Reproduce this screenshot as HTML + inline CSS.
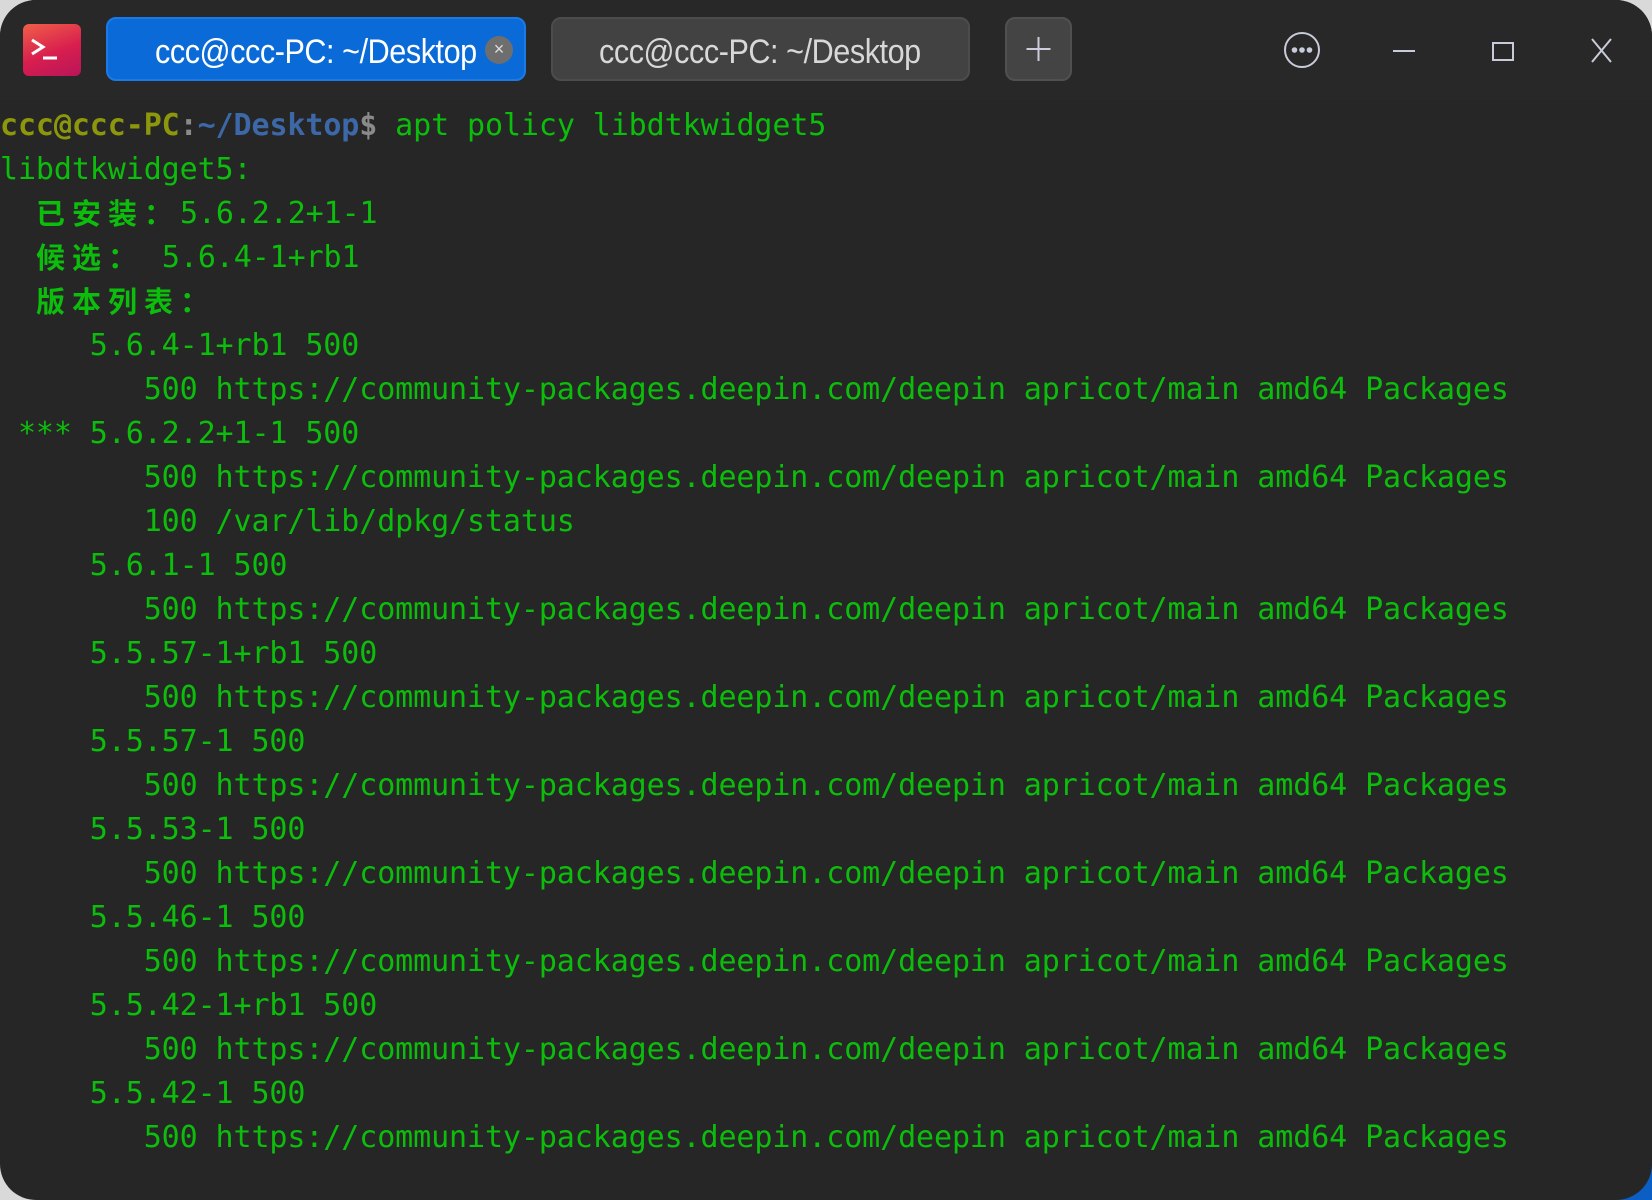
<!DOCTYPE html>
<html><head><meta charset="utf-8"><style>
html,body{margin:0;padding:0;width:1652px;height:1200px;overflow:hidden;background:#d9d9d9;}
body{position:relative;}
.bl{position:absolute;right:0;bottom:0;width:80px;height:80px;background:#0b5fc4;}
.win{position:absolute;left:0;top:0;width:1652px;height:1200px;background:#262626;border-radius:36px;overflow:hidden;}
.title{position:absolute;left:0;top:0;width:1652px;height:100px;background:#282828;}
.icon{position:absolute;left:23px;top:24px;width:58px;height:52px;border-radius:6px;background:linear-gradient(160deg,#f06048,#d81e4e 55%,#b8155a);}
.tab{position:absolute;top:17px;height:64px;border-radius:10px;box-sizing:border-box;font-family:"Liberation Sans",sans-serif;font-size:34px;letter-spacing:-0.5px;line-height:64px;}
.tab span.tx{position:absolute;top:1px;transform:scaleX(0.9);transform-origin:left center;white-space:nowrap;}
.t1{left:106px;width:420px;background:#0a6ad8;border:2px solid #1a7ae8;color:#fff;}
.t2{left:551px;width:419px;background:#424242;border:2px solid #4c4c4c;color:#d8d8d8;}
.t3{left:1005px;width:67px;background:#444;border:2px solid #505050;}
.term{position:absolute;left:0;top:104px;font-family:"DejaVu Sans Mono","Noto Sans CJK SC",monospace;font-size:30px;line-height:44px;color:#0cbd0c;white-space:pre;letter-spacing:-0.1px;}
.term div{height:44px;}
.u{color:#8c970b;font-weight:bold}.c{color:#8a8a8a;font-weight:bold}.d{color:#3d68a8;font-weight:bold}
.k{display:inline-block;width:36px;height:44px;line-height:40px;vertical-align:top;font-family:"Noto Sans CJK SC",sans-serif;font-weight:bold;font-size:29px;text-align:left;letter-spacing:0;}
</style></head><body>
<div class="bl"></div>
<div class="win">
<div class="title">
<div class="icon"><svg width="58" height="52" viewBox="0 0 58 52"><path d="M9 16 L20 23 L9 30" stroke="#fff" stroke-width="3" fill="none"/><path d="M20 34 H34" stroke="#fff" stroke-width="3"/></svg></div>
<div class="tab t1"><span class="tx" style="left:47px">ccc@ccc-PC: ~/Desktop</span><div style="position:absolute;left:377px;top:17px;width:28px;height:28px;border-radius:50%;background:#6e6e6e;color:#ddd;font-size:18px;line-height:27px;text-align:center;letter-spacing:0">×</div></div>
<div class="tab t2"><span class="tx" style="left:46px">ccc@ccc-PC: ~/Desktop</span></div>
<div class="tab t3"><svg width="63" height="60" viewBox="0 0 63 60"><path d="M31.5 18 V42 M19.5 30 H43.5" stroke="#ccd" stroke-width="2"/></svg></div>
<svg style="position:absolute;left:1280px;top:30px" width="360" height="40" viewBox="0 0 360 40">
<circle cx="22" cy="20" r="17" stroke="#c8ccd8" stroke-width="2" fill="none"/>
<circle cx="14.5" cy="20" r="2.8" fill="#c8ccd8"/><circle cx="22" cy="20" r="2.8" fill="#c8ccd8"/><circle cx="29.5" cy="20" r="2.8" fill="#c8ccd8"/>
<path d="M113 21 H135" stroke="#c8ccd8" stroke-width="2"/>
<rect x="213" y="13" width="20" height="17" stroke="#c8ccd8" stroke-width="2" fill="none"/>
<path d="M312 9 L331 32 M331 9 L312 32" stroke="#c8ccd8" stroke-width="2"/>
</svg>
</div>
<div class="term"><div><span class="u">ccc@ccc-PC</span><span class="c">:</span><span class="d">~/Desktop</span><span class="c">$</span> apt policy libdtkwidget5</div><div>libdtkwidget5:</div><div>  <span class="k">已</span><span class="k">安</span><span class="k">装</span><span class="k">：</span>5.6.2.2+1-1</div><div>  <span class="k">候</span><span class="k">选</span><span class="k">：</span> 5.6.4-1+rb1</div><div>  <span class="k">版</span><span class="k">本</span><span class="k">列</span><span class="k">表</span><span class="k">：</span></div><div>     5.6.4-1+rb1 500</div><div>        500 https://community-packages.deepin.com/deepin apricot/main amd64 Packages</div><div> *** 5.6.2.2+1-1 500</div><div>        500 https://community-packages.deepin.com/deepin apricot/main amd64 Packages</div><div>        100 /var/lib/dpkg/status</div><div>     5.6.1-1 500</div><div>        500 https://community-packages.deepin.com/deepin apricot/main amd64 Packages</div><div>     5.5.57-1+rb1 500</div><div>        500 https://community-packages.deepin.com/deepin apricot/main amd64 Packages</div><div>     5.5.57-1 500</div><div>        500 https://community-packages.deepin.com/deepin apricot/main amd64 Packages</div><div>     5.5.53-1 500</div><div>        500 https://community-packages.deepin.com/deepin apricot/main amd64 Packages</div><div>     5.5.46-1 500</div><div>        500 https://community-packages.deepin.com/deepin apricot/main amd64 Packages</div><div>     5.5.42-1+rb1 500</div><div>        500 https://community-packages.deepin.com/deepin apricot/main amd64 Packages</div><div>     5.5.42-1 500</div><div>        500 https://community-packages.deepin.com/deepin apricot/main amd64 Packages</div></div>
</div>
</body></html>
